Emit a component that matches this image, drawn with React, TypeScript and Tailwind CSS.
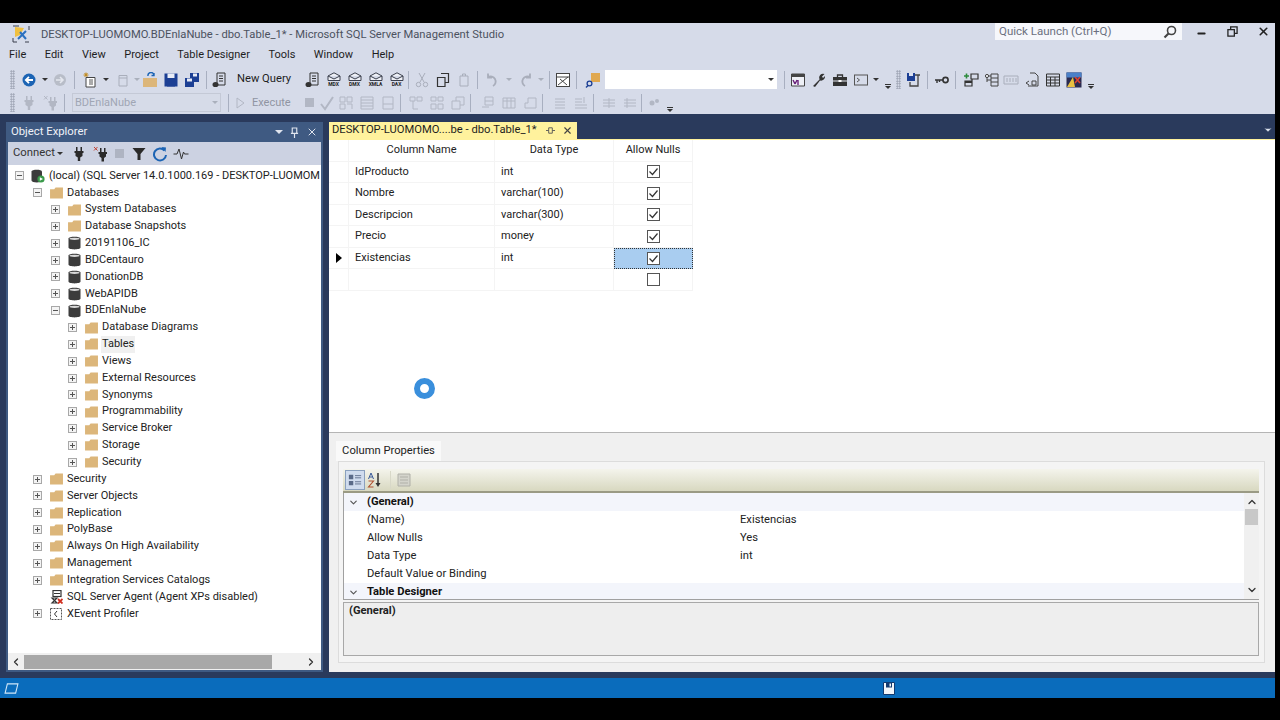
import { ReactNode } from "react";
import { ChevronDown, ChevronLeft, ChevronRight, ChevronUp, Minus, X } from "lucide-react";

const FONT = "font-['Roboto','Noto_Sans',sans-serif]";

// small svg wrapper, every toolbar glyph is drawn on a 16 grid
const Ico = ({ children, className = "" }: { children: ReactNode; className?: string }) => (
  <svg viewBox="0 0 16 16" className={`w-4 h-4 shrink-0 ${className}`} fill="none">
    {children}
  </svg>
);

const Folder = () => (
  <svg viewBox="0 0 14 13" className="w-[13px] h-[12px] shrink-0">
    <path d="M0 2.5 L0 12.5 L14 12.5 L14 0.5 L6 0.5 L4.5 2.5 Z" fill="#dcb67a" />
  </svg>
);

const Db = () => (
  <svg viewBox="0 0 13 14" className="w-[13px] h-[14px] shrink-0">
    <path d="M0.5 2.5 C0.5 0 12.5 0 12.5 2.5 L12.5 11.5 C12.5 14 0.5 14 0.5 11.5 Z" fill="#3c3c3c" />
    <ellipse cx="6.5" cy="2.8" rx="5" ry="1.1" fill="#d8d8d8" />
  </svg>
);

const Box = ({ open }: { open?: boolean }) => (
  <span className="w-[9px] h-[9px] shrink-0 border border-[#a8a8a8] bg-[#f4f4f4] flex items-center justify-center relative">
    <span className="w-[5px] h-px bg-[#555]" />
    {!open && <span className="absolute w-px h-[5px] bg-[#555]" />}
  </span>
);

const PlugIco = ({ fill, className = "" }: { fill: string; className?: string }) => (
  <Ico className={className}>
    <path d="M5 1 H6.5 V5 H5 Z M9.5 1 H11 V5 H9.5 Z M3.5 5 H12.5 V7 H11.5 V10 L9.2 11.5 V15 H6.8 V11.5 L4.5 10 V7 H3.5 Z" fill={fill} />
  </Ico>
);

const XPlugIco = ({ fill, cross, className = "" }: { fill: string; cross: string; className?: string }) => (
  <Ico className={className}>
    <path d="M7 2 H8.5 V6 H7 Z M11 2 H12.5 V6 H11 Z M5.5 6 H14 V8 H13 V10.5 L11 12 V15.5 H8.5 V12 L6.5 10.5 V8 H5.5 Z" fill={fill} />
    <path d="M1 1 L4.5 4.5 M4.5 1 L1 4.5" stroke={cross} />
  </Ico>
);

type Row = { depth: 0 | 1 | 2 | 3; label: string; kind: "folder" | "db" | "server" | "agent" | "xe"; open?: boolean; noBox?: boolean; sel?: boolean };

const rows: Row[] = [
  { depth: 0, label: "(local) (SQL Server 14.0.1000.169 - DESKTOP-LUOMOM", kind: "server", open: true },
  { depth: 1, label: "Databases", kind: "folder", open: true },
  { depth: 2, label: "System Databases", kind: "folder" },
  { depth: 2, label: "Database Snapshots", kind: "folder" },
  { depth: 2, label: "20191106_IC", kind: "db" },
  { depth: 2, label: "BDCentauro", kind: "db" },
  { depth: 2, label: "DonationDB", kind: "db" },
  { depth: 2, label: "WebAPIDB", kind: "db" },
  { depth: 2, label: "BDEnlaNube", kind: "db", open: true },
  { depth: 3, label: "Database Diagrams", kind: "folder" },
  { depth: 3, label: "Tables", kind: "folder", sel: true },
  { depth: 3, label: "Views", kind: "folder" },
  { depth: 3, label: "External Resources", kind: "folder" },
  { depth: 3, label: "Synonyms", kind: "folder" },
  { depth: 3, label: "Programmability", kind: "folder" },
  { depth: 3, label: "Service Broker", kind: "folder" },
  { depth: 3, label: "Storage", kind: "folder" },
  { depth: 3, label: "Security", kind: "folder" },
  { depth: 1, label: "Security", kind: "folder" },
  { depth: 1, label: "Server Objects", kind: "folder" },
  { depth: 1, label: "Replication", kind: "folder" },
  { depth: 1, label: "PolyBase", kind: "folder" },
  { depth: 1, label: "Always On High Availability", kind: "folder" },
  { depth: 1, label: "Management", kind: "folder" },
  { depth: 1, label: "Integration Services Catalogs", kind: "folder" },
  { depth: 1, label: "SQL Server Agent (Agent XPs disabled)", kind: "agent", noBox: true },
  { depth: 1, label: "XEvent Profiler", kind: "xe" },
];

const depthPad = { 0: "pl-[7px]", 1: "pl-[25px]", 2: "pl-[43px]", 3: "pl-[60px]" };

const RowIcon = ({ kind }: { kind: Row["kind"] }) => {
  if (kind === "folder") return <Folder />;
  if (kind === "db") return <Db />;
  if (kind === "server")
    return (
      <svg viewBox="0 0 14 14" className="w-[14px] h-[14px] shrink-0">
        <path d="M0.5 2.5 C0.5 0 11 0 11 2.5 L11 11.5 C11 14 0.5 14 0.5 11.5 Z" fill="#3c3c3c" />
        <circle cx="10" cy="10" r="3.6" fill="#3a9a4a" />
        <path d="M8.8 8.3 L12 10 L8.8 11.7 Z" fill="#fff" />
      </svg>
    );
  if (kind === "agent")
    return (
      <svg viewBox="0 0 14 14" className="w-[14px] h-[14px] shrink-0">
        <rect x="4" y="0.5" width="8" height="6" fill="none" stroke="#333" strokeWidth="1.2" />
        <path d="M5 3.5 H11 M3 8 H8 L3 13 H8 Z" stroke="#333" strokeWidth="1.2" fill="none" />
        <path d="M9 9 L13.5 13.5 M13.5 9 L9 13.5" stroke="#d03020" strokeWidth="1.8" />
      </svg>
    );
  return (
    <svg viewBox="0 0 14 14" className="w-[14px] h-[14px] shrink-0">
      <rect x="1.5" y="1.5" width="11" height="11" fill="#fff" stroke="#555" strokeDasharray="2 1" />
      <path d="M8 4 L5.5 7 L8 10" stroke="#333" fill="none" />
    </svg>
  );
};

const TreeRow = ({ r }: { r: Row }) => (
  <div className={`h-[16.85px] flex items-center ${depthPad[r.depth]}`}>
    {r.noBox ? <span className="w-[9px] shrink-0" /> : <Box open={r.open} />}
    <span className="w-[7px] shrink-0" />
    <span className="w-[14px] flex justify-center shrink-0">
      <RowIcon kind={r.kind} />
    </span>
    <span className={`ml-[3px] px-px whitespace-nowrap ${r.sel ? "bg-[#f0f0f0]" : ""}`}>{r.label}</span>
  </div>
);

const Sep = ({ className = "" }: { className?: string }) => <span className={`w-px h-[18px] bg-[#a8afc0] shrink-0 ${className}`} />;

const Gripper = ({ className = "" }: { className?: string }) => (
  <span className={`w-[5px] h-[19px] shrink-0 bg-[radial-gradient(#9aa0b0_0.8px,transparent_1px)] bg-[length:2.5px_2.5px] ${className}`} />
);

const Drop = ({ faded, className = "" }: { faded?: boolean; className?: string }) => (
  <span className={`w-0 h-0 border-x-[3px] border-x-transparent border-t-[3px] shrink-0 ${faded ? "border-t-[#aab0bc]" : "border-t-[#333]"} ${className}`} />
);

const Overflow = ({ className = "" }: { className?: string }) => (
  <span className={`flex flex-col items-center gap-px shrink-0 self-end mb-[2px] ${className}`}>
    <span className="w-[6px] h-px bg-[#333]" />
    <Drop />
  </span>
);

// the MDX / DMX / XMLA / DAX query buttons
const QueryIco = ({ label }: { label: string }) => (
  <span className="w-[21px] shrink-0 flex flex-col items-center leading-none">
    <svg viewBox="0 0 14 9" className="w-[14px] h-[9px]">
      <path d="M1 4 L7 0.8 L13 4 L13 8.5 L1 8.5 Z M1 4 L7 7 L13 4" fill="#eef0f6" stroke="#3a3f4c" />
    </svg>
    <span className="text-[5px] font-bold text-[#222] mt-px">{label}</span>
  </span>
);

const Slot = ({ children }: { children: ReactNode }) => <span className="w-[21px] flex justify-center shrink-0">{children}</span>;

const g = "#a9aebb";

const Toolbar1 = () => (
  <div className="h-[23px] flex items-center pl-[10px] text-[11.2px] text-[#1e1e1e]">
    <Gripper />
    <span className="w-[6px]" />
    <Ico>
      <circle cx="8" cy="8" r="6.5" fill="#1c64b4" />
      <path d="M12 8 H5 M8 4.8 L4.8 8 L8 11.2" stroke="#fff" strokeWidth="1.8" />
    </Ico>
    <Drop className="ml-[5px]" />
    <Ico className="ml-[4px]">
      <circle cx="8" cy="8" r="6" fill="#b8bdc8" />
      <path d="M4 8 H11 M8 5 L11 8 L8 11" stroke="#e4e7ee" strokeWidth="1.6" />
    </Ico>
    <Sep className="ml-[6px]" />
    <Ico className="ml-[7px]">
      <path d="M4 5.5 H13 V15 H4 Z" fill="#fff" stroke="#444" />
      <path d="M7 8 H11 M7 10 H11 M7 12 H11" stroke="#555" />
      <path d="M4 0.5 V5 M1.5 3 H6.5 M2.5 1 L5.5 4.5 M5.5 1 L2.5 4.5" stroke="#c08a20" />
    </Ico>
    <Drop className="ml-[5px]" />
    <Ico className="ml-[6px]">
      <path d="M4 3.5 H12 V14 H4 Z M4 6 H12" stroke={g} />
    </Ico>
    <Drop faded className="ml-[3px]" />
    <Ico className="ml-[2px]">
      <path d="M1 6 H15 V15 H1 Z" fill="#dcb67a" />
      <path d="M6 4 A3 3 0 0 1 12 3 M12 1 V3.5 H9.5" stroke="#1c64b4" strokeWidth="1.4" />
    </Ico>
    <Ico className="ml-[5px]">
      <path d="M1.5 1.5 H14.5 V14.5 H1.5 Z" fill="#1c3f94" />
      <rect x="4.5" y="1.5" width="7" height="4.5" fill="#e8ecf6" />
      <rect x="4" y="9.5" width="8" height="5" fill="#1c3f94" />
    </Ico>
    <Ico className="ml-[5px]">
      <path d="M1 6 H10 V15 H1 Z M6 1 H15 V10 H10 V6 H6 Z" fill="#1c3f94" />
      <rect x="3" y="6.5" width="5" height="3" fill="#e8ecf6" />
      <rect x="9" y="1.5" width="4" height="3" fill="#e8ecf6" />
    </Ico>
    <Sep className="ml-[6px]" />
    <Ico className="ml-[5px]">
      <path d="M5 1 H13 V13 H5 Z M7 4 H11 M7 6.5 H11 M7 9 H11" stroke="#333" />
      <ellipse cx="3.5" cy="12.5" rx="3" ry="2.6" fill="#333" />
    </Ico>
    <span className="ml-[9px] w-[59px] whitespace-nowrap">New Query</span>
    <span className="w-[7px]" />
    <Ico className="mx-[2px]">
      <path d="M5 1 H13 V13 H5 Z M7 4 H11 M7 6.5 H11 M7 9 H11" stroke="#333" />
      <ellipse cx="3.5" cy="12.5" rx="3" ry="2.6" fill="#333" />
    </Ico>
    <QueryIco label="MDX" />
    <QueryIco label="DMX" />
    <QueryIco label="XMLA" />
    <QueryIco label="DAX" />
    <Sep className="ml-[1px]" />
    <Ico className="ml-[5px]">
      <path d="M5 1 L10 10 M11 1 L6 10" stroke={g} />
      <circle cx="4.5" cy="12.5" r="2.2" stroke={g} />
      <circle cx="11.5" cy="12.5" r="2.2" stroke={g} />
    </Ico>
    <Ico className="ml-[5px]">
      <path d="M6 1.5 H13.5 V10.5 H10 M2.5 5.5 H10 V14.5 H2.5 Z" stroke="#333" strokeWidth="1.2" />
    </Ico>
    <Ico className="ml-[5px]">
      <path d="M4 4 H12 V14 H4 Z M6.5 4 V2 H9.5 V4" stroke={g} />
    </Ico>
    <Sep className="ml-[5px]" />
    <Ico className="ml-[7px]">
      <path d="M3 5 A5 5 0 1 1 8 14 M3 1.5 V5.5 H7" stroke={g} strokeWidth="1.8" />
    </Ico>
    <Drop faded className="ml-[5px]" />
    <Ico className="ml-[5px]">
      <path d="M13 5 A5 5 0 1 0 8 14 M13 1.5 V5.5 H9" stroke={g} strokeWidth="1.8" />
    </Ico>
    <Drop faded className="ml-[5px]" />
    <Sep className="ml-[5px]" />
    <Ico className="ml-[5px]">
      <rect x="1.5" y="1.5" width="13" height="13" fill="#fff" stroke="#444" />
      <path d="M1.5 5 H14.5 M3 13 L13 5 M5 7 L12 13" stroke="#444" />
    </Ico>
    <Sep className="ml-[5px]" />
    <Ico className="ml-[8px]">
      <rect x="6" y="1" width="9" height="9" fill="#e0a850" />
      <circle cx="4.5" cy="11.5" r="2.4" stroke="#1c3f94" strokeWidth="1.3" />
      <path d="M3 13.5 L1 15.5" stroke="#1c3f94" strokeWidth="1.4" />
    </Ico>
    <span className="ml-[4px] w-[172px] h-[19px] bg-white flex items-center justify-end pr-[3px]">
      <Drop />
    </span>
    <Sep className="ml-[7px]" />
    <Ico className="ml-[5px]">
      <path d="M1.5 2 H14.5 V14 H1.5 Z" fill="#eef0f6" stroke="#444" />
      <path d="M1.5 2 H14.5 V5 H1.5 Z" fill="#444" />
      <path d="M3 8 L5 12 M7 8 L5 12 M8 8 L8 13" stroke="#68217a" strokeWidth="1.4" />
    </Ico>
    <Ico className="ml-[5px]">
      <path d="M2 14 L8.5 7.5 A4 4 0 0 1 13.5 2 L11 4.5 L12 6 L14 4 A4 4 0 0 1 9 8.5 L4 15 Z" fill="#333" />
    </Ico>
    <Ico className="ml-[5px]">
      <path d="M1 5 H15 V14 H1 Z" fill="#333" />
      <path d="M5.5 5 V3 H10.5 V5" stroke="#333" strokeWidth="1.3" />
      <path d="M1 9 H15" stroke="#e4e7ee" />
      <rect x="6.5" y="8" width="3" height="2" fill="#fff" />
    </Ico>
    <Ico className="ml-[5px]">
      <rect x="1.5" y="3" width="13" height="10" stroke="#555" />
      <path d="M4 6 L6.5 8 L4 10" stroke="#555" />
    </Ico>
    <Drop className="ml-[4px]" />
    <Overflow className="ml-[6px]" />
    <Gripper className="ml-[5px]" />
    <Ico className="ml-[4px]">
      <path d="M2 1 H10 V9 H2 Z" fill="#1c3f94" />
      <rect x="4" y="1" width="4" height="3" fill="#dde3f2" />
      <path d="M10 3 H15 M13 3 V14 H5 V10" stroke="#444" strokeWidth="1.3" />
    </Ico>
    <Sep className="ml-[6px]" />
    <Ico className="ml-[6px]">
      <path d="M1 8 H9 M3 8 V11 M5.5 8 V10" stroke="#333" strokeWidth="1.4" />
      <circle cx="11.5" cy="8" r="2.6" stroke="#333" strokeWidth="1.6" />
    </Ico>
    <Sep className="ml-[5px]" />
    <Ico className="ml-[7px]">
      <path d="M1 4 H6 M3.5 1.5 V6.5" stroke="#2c8a3c" strokeWidth="1.6" />
      <path d="M8 2 H15 V7 H8 Z M2 9 H9 V14 H2 Z M9 7 V9" stroke="#333" strokeWidth="1.2" />
      <rect x="2" y="9" width="7" height="2" fill="#333" />
    </Ico>
    <Ico className="ml-[5px]">
      <path d="M7 2 H14 V14 H7 Z M7 6 H14 M7 10 H14 M7 4 H3 V10 M3 8 H7" stroke="#444" />
      <circle cx="3" cy="4" r="1.6" fill="#f0f2f7" stroke="#444" />
    </Ico>
    <Ico className="ml-[3px]">
      <path d="M1 4 H15 V12 H1 Z M4 6 V10 M7 6 V10 M10 6 V10 M13 6 V10" stroke={g} />
    </Ico>
    <Ico className="ml-[5px]">
      <path d="M6 1 H11 L14 4 V14 H4 M5 13 L2 11 M5 9 L2 11 M8 9 H12 V13 H8 Z" stroke="#444" />
    </Ico>
    <Ico className="ml-[5px]">
      <path d="M1.5 2 H14.5 V14 H1.5 Z M1.5 5 H14.5 M1.5 8 H14.5 M1.5 11 H14.5 M5.5 5 V14 M10 5 V14" stroke="#333" />
    </Ico>
    <Ico className="ml-[5px]">
      <rect x="0.5" y="0.5" width="15" height="15" fill="#2a2a50" />
      <rect x="0.5" y="0.5" width="15" height="5" fill="#4a80c8" />
      <path d="M1 15 L7 5 L9 15 Z" fill="#e8c040" />
      <path d="M9 5 L14 11 M14 5 L9 11" stroke="#e04030" strokeWidth="1.5" />
    </Ico>
    <Overflow className="ml-[6px]" />
  </div>
);

const ghost = "#b2b7c4";

const Toolbar2 = () => (
  <div className="h-[23px] flex items-center pl-[10px] text-[11px] text-[#9095a2]">
    <Gripper />
    <PlugIco fill={ghost} className="ml-[6px]" />
    <XPlugIco fill={ghost} cross={ghost} className="ml-[6px]" />
    <Sep className="ml-[5px]" />
    <span className="ml-[7px] w-[149px] h-[19px] border border-[#c4c9d6] bg-[#d6dbe8] flex items-center justify-between px-[2px]">
      <span className="text-[#a0a6b4] mt-px">BDEnlaNube</span>
      <Drop faded />
    </span>
    <Sep className="ml-[7px]" />
    <svg viewBox="0 0 10 12" className="w-[10px] h-[12px] ml-[6px] shrink-0">
      <path d="M2 1 L9 6 L2 11 Z" fill="none" stroke={ghost} />
    </svg>
    <span className="ml-[7px] w-[41px] mt-px">Execute</span>
    <span className="ml-[12px] w-[9px] h-[9px] bg-[#b2b7c4] shrink-0" />
    <Ico className="ml-[5px]">
      <path d="M2 9 L6 14 L14 2" stroke={ghost} strokeWidth="2" />
    </Ico>
    {["M2 2 H7 V7 H2 Z M9 2 H14 V7 H9 Z M2 9 H7 V14 H2 Z M9 9 H14 V14", "M2 2 H14 V14 H2 Z M2 5 H14 M2 8 H14 M2 11 H14", "M3 2 H13 V14 H3 Z M3 9 H13"].map((d, i) => (
      <Slot key={i}>
        <Ico>
          <path d={d} stroke={ghost} />
        </Ico>
      </Slot>
    ))}
    <Sep className="ml-[2px]" />
    <span className="w-[4px]" />
    {["M2 2 H7 V6 H2 Z M9 2 H14 V6 H9 Z M5 6 V14 H10", "M2 2 H7 V6 H2 Z M9 2 H14 V6 H9 Z M2 9 H7 V14 H2 Z M9 9 H14 V14 H9 Z", "M2 6 H10 V14 H2 Z M6 6 V2 H14 V10 H10"].map((d, i) => (
      <Slot key={i}>
        <Ico>
          <path d={d} stroke={ghost} />
        </Ico>
      </Slot>
    ))}
    <Sep className="ml-[2px]" />
    <span className="w-[6px]" />
    {["M5 2 H13 V10 H5 Z M5 6 H13 M2 12 H9", "M2 3 H14 V13 H2 Z M2 6 H14 M6 3 V13 M10 3 V13", "M6 3 H14 V13 H3 V8 H6 Z"].map((d, i) => (
      <Slot key={i}>
        <Ico>
          <path d={d} stroke={ghost} />
        </Ico>
      </Slot>
    ))}
    <Sep className="ml-[2px]" />
    <span className="w-[6px]" />
    <Slot>
      <Ico>
        <path d="M3 4 H13 M3 7 H13 M3 10 H13 M3 13 H13" stroke={ghost} />
      </Ico>
    </Slot>
    <Slot>
      <Ico>
        <path d="M2 4 H9 M2 7 H9 M2 10 H14 M2 13 H14 M11 2 V8" stroke={ghost} />
      </Ico>
    </Slot>
    <Sep className="ml-[2px]" />
    <span className="w-[4px]" />
    <Slot>
      <Ico>
        <path d="M2 5 H14 M2 8 H14 M2 11 H14 M8 3 V13" stroke={ghost} />
      </Ico>
    </Slot>
    <Slot>
      <Ico>
        <path d="M2 5 H14 M2 8 H14 M2 11 H14 M5 3 V13" stroke={ghost} />
      </Ico>
    </Slot>
    <Sep className="ml-[1px]" />
    <span className="w-[4px]" />
    <Ico>
      <circle cx="6" cy="8" r="2.5" fill={ghost} />
      <circle cx="11" cy="6" r="2" fill={ghost} />
    </Ico>
    <Overflow className="ml-[5px]" />
  </div>
);

const columns = [
  { name: "IdProducto", type: "int", checked: true },
  { name: "Nombre", type: "varchar(100)", checked: true },
  { name: "Descripcion", type: "varchar(300)", checked: true },
  { name: "Precio", type: "money", checked: true },
  { name: "Existencias", type: "int", checked: true, current: true },
  { name: "", type: "", checked: false },
];

const Check = ({ on }: { on: boolean }) => (
  <svg viewBox="0 0 13 13" className="w-[13px] h-[13px]">
    <rect x="0.5" y="0.5" width="12" height="12" fill="#fff" stroke="#555" />
    {on && <path d="M2.5 6.5 L5.5 9.5 L10.5 3.5" fill="none" stroke="#333" strokeWidth="1.2" />}
  </svg>
);

const Designer = () => (
  <div className="h-[293px] bg-white border-b border-[#b5b5b5] text-[11px] text-[#222]">
    <div className="w-[364px] grid grid-cols-[20px_146px_119px_79px]">
      <div className="h-[21.5px] border-r border-b border-[#f4f4f4]" />
      <div className="h-[21.5px] flex items-center justify-center border-r border-b border-[#f4f4f4]">Column Name</div>
      <div className="h-[21.5px] flex items-center justify-center border-r border-b border-[#f4f4f4]">Data Type</div>
      <div className="h-[21.5px] flex items-center justify-center border-r border-b border-[#f4f4f4]">Allow Nulls</div>
      {columns.map((c, i) => (
        <div key={i} className="contents">
          <div className="h-[21.6px] flex items-center justify-center border-r border-b border-[#f4f4f4]">
            {c.current && <span className="w-0 h-0 border-y-[5px] border-y-transparent border-l-[6px] border-l-black" />}
          </div>
          <div className="h-[21.6px] flex items-center pl-[6px] border-r border-b border-[#f4f4f4]">{c.name}</div>
          <div className="h-[21.6px] flex items-center pl-[6px] border-r border-b border-[#f4f4f4]">{c.type}</div>
          <div className={`h-[21.6px] flex items-center justify-center border-r border-b ${c.current ? "bg-[#a9cdf0] border border-dotted border-[#333]" : "border-[#f4f4f4]"}`}>
            <Check on={c.checked} />
          </div>
        </div>
      ))}
    </div>
  </div>
);

const props = [
  { label: "(Name)", value: "Existencias" },
  { label: "Allow Nulls", value: "Yes" },
  { label: "Data Type", value: "int" },
  { label: "Default Value or Binding", value: "" },
];

const CatRow = ({ label }: { label: string }) => (
  <div className="h-[18px] shrink-0 bg-[#f3f5fb] flex items-center font-bold text-[#111]">
    <ChevronDown className="w-[11px] h-[11px] ml-[4px] text-[#555]" strokeWidth={2.5} />
    <span className="ml-[8px]">{label}</span>
  </div>
);

const ColumnProps = () => (
  <div className="flex-1 bg-[#f0f0f0] flex flex-col text-[11.2px] text-[#222] pl-[9px] pr-[10px] pt-[8px] pb-[9px]">
    <div className="h-[20px] w-[105px] ml-[-2px] bg-[#f9f9f9] flex items-center justify-center">Column Properties</div>
    <div className="flex-1 border border-[#dcdcdc] bg-[#f4f4f4] pl-[4px] pr-[5px] pt-[7px] pb-[6px] flex flex-col">
      <div className="h-[24px] bg-gradient-to-b from-[#f4f4ec] to-[#d8d8c0] border-b-2 border-[#9a9a84] flex items-center pl-[2px] gap-[2px]">
        <span className="w-[20px] h-[20px] bg-[#d0dcee] border border-[#8aa0be] flex items-center justify-center">
          <Ico className="!w-[14px] !h-[14px]">
            <path d="M1 2 H6 V7 H1 Z M1 9 H6 V14 H1 Z" fill="#5a6a88" />
            <path d="M8 3 H15 M8 5.5 H15 M8 10 H15 M8 12.5 H15" stroke="#5a6a88" />
          </Ico>
        </span>
        <Ico>
          <path d="M1.5 7 L4 1 L6.5 7 M2.5 5 H5.5" stroke="#3a5a9a" strokeWidth="1" />
          <path d="M1.5 9 H6.5 L1.5 15 H6.5" stroke="#b05030" strokeWidth="1.1" />
          <path d="M11 1 V13" stroke="#333" strokeWidth="1.5" />
          <path d="M8.5 11 L11 15 L13.5 11 Z" fill="#333" />
        </Ico>
        <span className="w-px h-[18px] bg-[#d8d8c8] ml-[5px]" />
        <Ico className="ml-[3px]">
          <path d="M2 2 H14 V14 H2 Z" fill="#d4d4cc" stroke="#b0b0a8" />
          <path d="M4 5 H12 M4 8 H12 M4 11 H12" stroke="#b0b0a8" />
        </Ico>
      </div>
      <div className="h-[107px] flex border-b border-[#a0a0a0] border-l bg-white">
        <div className="flex-1 flex flex-col overflow-hidden">
          <CatRow label="(General)" />
          {props.map((p) => (
            <div key={p.label} className="h-[18px] shrink-0 flex items-center pl-[23px]">
              <span className="w-[373px]">{p.label}</span>
              <span>{p.value}</span>
            </div>
          ))}
          <CatRow label="Table Designer" />
        </div>
        <div className="w-[15px] bg-[#f0f0f0] flex flex-col items-center justify-between py-[3px] relative">
          <ChevronUp className="w-3 h-3 text-[#333]" strokeWidth={2.5} />
          <span className="absolute top-[16px] w-[13px] h-[16px] bg-[#c8c8c8]" />
          <ChevronDown className="w-3 h-3 text-[#333]" strokeWidth={2.5} />
        </div>
      </div>
      <div className="flex-1 mt-[2px] border border-[#a8a8a8] bg-[#eeeeee] pl-[5px] font-bold text-[#222]">(General)</div>
    </div>
  </div>
);

export default function App() {
  return (
    <div className={`w-[1280px] h-[720px] bg-black flex flex-col overflow-hidden relative ${FONT}`}>
      <div className="h-[23px] shrink-0" />
      <div className="h-[655px] w-[1275px] bg-[#d6dbe9] flex flex-col">
        {/* title bar */}
        <div className="h-[20px] flex items-start relative text-[11.2px] text-[#4c5260]">
          <svg viewBox="0 0 18 18" className="w-[18px] h-[18px] ml-[12px] mt-[2px]">
            <path d="M1 1 H7 M17 1 V5 M1 17 H5 M17 17 H13 M1 13 V17" stroke="#3a3f4c" />
            <path d="M3 2 L12 3 L8 10 L3 12 Z" fill="#f0c040" />
            <path d="M6 14 L14 6 M8 7 L14 14" stroke="#2a70c0" strokeWidth="2" />
          </svg>
          <span className="ml-[11px] mt-[4px] whitespace-nowrap">DESKTOP-LUOMOMO.BDEnlaNube - dbo.Table_1* - Microsoft SQL Server Management Studio</span>
          <div className="ml-auto flex items-center h-[17px]">
            <div className="w-[187px] h-[17px] bg-[#f6f7fb] flex items-center justify-between px-[4px] text-[11.5px] text-[#6b7080]">
              <span>Quick Launch (Ctrl+Q)</span>
              <svg viewBox="0 0 14 14" className="w-[14px] h-[14px] mr-[1px]">
                <circle cx="8.5" cy="5.5" r="4" fill="none" stroke="#444" strokeWidth="1.6" />
                <path d="M5.5 8.5 L1.5 12.5" stroke="#444" strokeWidth="2.2" />
              </svg>
            </div>
            <Minus className="w-[11px] h-[11px] ml-[14px] text-[#222] mt-[3px]" strokeWidth={4} />
            <svg viewBox="0 0 12 12" className="w-[11px] h-[11px] ml-[20px]">
              <path d="M1 4 H8 V11 H1 Z M4 4 V1 H11 V8 H8" fill="none" stroke="#222" strokeWidth="1.4" />
            </svg>
            <X className="w-[13px] h-[13px] ml-[19px] mr-[5px] text-[#222]" strokeWidth={3} />
          </div>
        </div>
        {/* menu */}
        <div className="h-[25px] flex items-center pl-[9px] gap-[18.5px] text-[11px] text-[#1e1e1e]">
          {["File", "Edit", "View", "Project", "Table Designer", "Tools", "Window", "Help"].map((m) => (
            <span key={m}>{m}</span>
          ))}
        </div>
        <Toolbar1 />
        <Toolbar2 />
        {/* dock area */}
        <div className="flex-1 min-h-0 bg-[#2a3a5c] flex pt-[8px] pb-[6px] pl-[6px] gap-[6px]">
          <div className="w-[317px] bg-[#3f5a82] flex flex-col p-[2px] pt-0">
            <div className="h-[20px] flex items-center pl-[3px] text-[11.3px] text-[#f0f2f8]">
              <span>Object Explorer</span>
              <span className="ml-auto flex items-center gap-[7px] mr-[3px] text-[#dfe4ee]">
                <span className="w-0 h-0 border-x-[4px] border-x-transparent border-t-[4px] border-t-[#dfe4ee]" />
                <svg viewBox="0 0 10 12" className="w-[9px] h-[11px]">
                  <path d="M2.5 1 H7.5 V7 H2.5 Z M1 7 H9 M5 7 V12" fill="none" stroke="#dfe4ee" strokeWidth="1.3" />
                </svg>
                <X className="w-[12px] h-[12px]" strokeWidth={2} />
              </span>
            </div>
            <div className="h-[23px] bg-[#ccd2e2] flex items-center pl-[5px] text-[11.3px] text-[#333]">
              <span className="w-[42px] whitespace-nowrap">Connect</span>
              <Drop className="ml-[2px]" />
              <PlugIco fill="#2a2a2a" className="ml-[8px]" />
              <XPlugIco fill="#2a2a2a" cross="#c04030" className="ml-[6px]" />
              <span className="w-[9px] h-[9px] ml-[6px] bg-[#aeb4c2]" />
              <Ico className="ml-[7px]">
                <path d="M1.5 2 H14.5 L9.5 8 V14 H6.5 V8 Z" fill="#2a2a2a" />
              </Ico>
              <Ico className="ml-[5px]">
                <path d="M12.5 4.5 A6 6 0 1 0 14 9" stroke="#1c64b4" strokeWidth="2" />
                <path d="M9.5 1 L14 1.5 L13.5 6 Z" fill="#1c64b4" />
              </Ico>
              <Ico className="ml-[5px]">
                <path d="M0.5 8 H4 L6 3 L8.5 13 L10.5 6 L11.5 8 H15.5" stroke="#333" />
              </Ico>
            </div>
            <div className="flex-1 min-h-0 bg-white overflow-hidden pt-[2.5px] text-[11px] text-[#222]">
              {rows.map((r) => (
                <TreeRow key={r.label + r.depth} r={r} />
              ))}
            </div>
            <div className="h-[17px] bg-[#f0f0f0] flex items-center">
              <ChevronLeft className="w-[12px] h-[12px] ml-[2px] text-[#333]" strokeWidth={2.5} />
              <span className="w-[248px] h-[14px] ml-[2px] bg-[#a8a8a8]" />
              <ChevronRight className="w-[12px] h-[12px] ml-auto mr-[4px] text-[#333]" strokeWidth={2.5} />
            </div>
          </div>
          <div className="w-[946px] flex flex-col">
            <div className="h-[17px] flex">
              <div className="w-[248px] bg-[#fff29d] flex items-center pl-[3px] text-[11.2px] text-[#1e1e1e] whitespace-nowrap">
                <span>DESKTOP-LUOMOMO....be - dbo.Table_1*</span>
                <span className="ml-auto flex items-center gap-[7px] mr-[4px]">
                  <svg viewBox="0 0 10 10" className="w-[9px] h-[9px]">
                    <path d="M0 5 H3 M3 2 H7 V8 H3 Z M7 5 H10" fill="none" stroke="#555" />
                  </svg>
                  <X className="w-[11px] h-[11px] text-[#444]" strokeWidth={2.5} />
                </span>
              </div>
              <ChevronDown className="w-[10px] h-[10px] ml-auto mr-[2px] mt-[3px] text-[#dfe4ee] fill-[#dfe4ee]" />
            </div>
            <div className="h-px bg-[#fff29d]" />
            <Designer />
            <ColumnProps />
          </div>
        </div>
      </div>
      {/* status bar */}
      <div className="h-[20px] w-[1275px] bg-[#0a6cbc] flex items-center relative shrink-0">
        <svg viewBox="0 0 16 12" className="w-[15px] h-[11px] ml-[4px]">
          <path d="M3.5 1 H15 L12.5 11 H1 Z" fill="none" stroke="#cfe6f8" strokeWidth="1.2" />
        </svg>
        <svg viewBox="0 0 12 13" className="w-[12px] h-[13px] absolute left-[883px] top-[4px]">
          <path d="M0.5 0.5 H11.5 V12.5 H0.5 Z" fill="#f2f6fb" stroke="#123a70" />
          <rect x="3" y="1" width="6" height="4.5" fill="#123a70" />
          <rect x="6.5" y="1.5" width="1.5" height="3" fill="#f2f6fb" />
        </svg>
      </div>
      {/* busy cursor */}
      <span className="absolute left-[414px] top-[378px] w-[21px] h-[21px] rounded-full border-[6px] border-[#3a8fdc] bg-white" />
    </div>
  );
}
